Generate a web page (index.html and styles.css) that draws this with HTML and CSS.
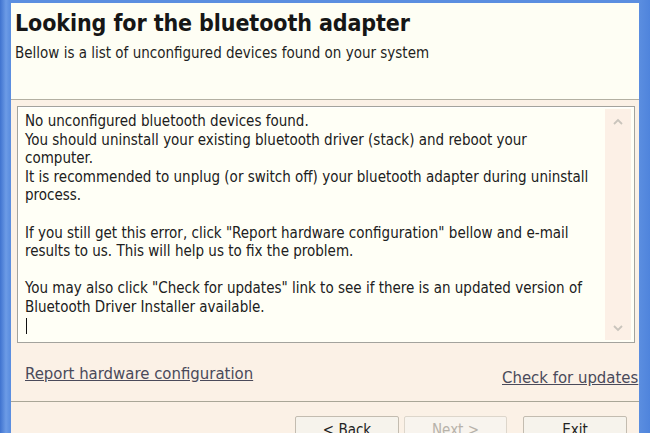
FILE: index.html
```html
<!DOCTYPE html>
<html>
<head>
<meta charset="utf-8">
<link rel="stylesheet" href="styles.css">
</head>
<body>
<div class="frame">
  <div class="window">
    <div class="header">
      <h1 class="title">Looking for the bluetooth adapter</h1>
      <p class="subtitle">Bellow is a list of unconfigured devices found on your system</p>
    </div>
    <div class="content">
      <div class="memo">
        <div class="memo-text">
          <p class="line">No unconfigured bluetooth devices found.</p>
          <p class="line">You should uninstall your existing bluetooth driver (stack) and reboot your</p>
          <p class="line">computer.</p>
          <p class="line">It is recommended to unplug (or switch off) your bluetooth adapter during uninstall</p>
          <p class="line">process.</p>
          <p class="line">&nbsp;</p>
          <p class="line">If you still get this error, click "Report hardware configuration" bellow and e-mail</p>
          <p class="line">results to us. This will help us to fix the problem.</p>
          <p class="line">&nbsp;</p>
          <p class="line">You may also click "Check for updates" link to see if there is an updated version of</p>
          <p class="line">Bluetooth Driver Installer available.</p>
          <p class="line"><span class="caret"></span></p>
        </div>
        <div class="scrollbar">
          <svg class="arrow" width="12" height="8" viewBox="0 0 12 8"><path d="M2 6 L6 2 L10 6" fill="none" stroke="#c9c4bc" stroke-width="1.8"/></svg>
          <svg class="arrow" width="12" height="8" viewBox="0 0 12 8"><path d="M2 2 L6 6 L10 2" fill="none" stroke="#c9c4bc" stroke-width="1.8"/></svg>
        </div>
      </div>
      <div class="links">
        <a class="link link-report">Report hardware configuration</a>
        <a class="link link-update">Check for updates</a>
      </div>
    </div>
    <div class="footer">
      <button class="btn btn-back">&lt; Back</button>
      <button class="btn btn-next" disabled>Next &gt;</button>
      <button class="btn btn-exit">Exit</button>
    </div>
  </div>
</div>
</body>
</html>
```

FILE: styles.css
```css
html, body {
  margin: 0;
  padding: 0;
  height: 100%;
  overflow: hidden;
}
body {
  background: #5a8de0;
  font-family: "DejaVu Sans Condensed", "DejaVu Sans", sans-serif;
  color: #1a1a1a;
}
.frame {
  height: 100%;
  padding: 3px 11px 0 11px;
  box-sizing: border-box;
  background: linear-gradient(to right, #3f73cf 0, #6c9be6 6px, #5b8ee0 10px, #5b8ee0 639px, #4f84dc 650px);
}
.window {
  height: 100%;
  display: flex;
  flex-direction: column;
  background: #fbf1e6;
  overflow: hidden;
}
.header, .content, .footer {
  flex-shrink: 0;
}
.header {
  height: 97px;
  box-sizing: border-box;
  background: #fefef4;
  border-bottom: 1px solid #b3b0a2;
  padding: 6px 0 0 4px;
}
.title {
  margin: 0;
  font-size: 23px;
  font-weight: bold;
  line-height: 28px;
  color: #161616;
  letter-spacing: -0.1px;
}
.subtitle {
  margin: 7px 0 0 0;
  font-size: 15px;
  line-height: 18px;
  color: #1e1e1e;
}
.content {
  padding: 6px 4px 0 6px;
}
.memo {
  height: 237px;
  box-sizing: border-box;
  border: 1px solid #a3a39d;
  box-shadow: inset 1px 1px 0 #ffffff;
  background: #fffff6;
  display: flex;
}
.memo-text {
  flex: 1;
  padding: 5px 0 0 7px;
}
.line {
  margin: 0;
  font-size: 15px;
  line-height: 18.6px;
  white-space: nowrap;
  color: #202020;
}
.caret {
  display: inline-block;
  width: 1px;
  height: 16px;
  background: #111;
  vertical-align: middle;
  margin-left: 1px;
}
.scrollbar {
  width: 26px;
  margin: 2px 3px 2px 0;
  background: #fcf0e6;
  display: flex;
  flex-direction: column;
  justify-content: space-between;
  align-items: center;
  padding: 9px 0 8px;
}
.arrow {
  display: block;
}
.links {
  height: 58px;
  position: relative;
  border-bottom: 1px solid #a9a697;
  margin: 0 -4px 0 -6px;
}
.link {
  position: absolute;
  font-size: 16.6px;
  color: #4a4a5a;
  text-decoration: underline;
  white-space: nowrap;
}
.link-report {
  left: 14px;
  top: 21px;
}
.link-update {
  left: 491px;
  top: 25px;
}
.footer {
  display: flex;
  padding: 14px 0 0 284px;
}
.btn {
  height: 30px;
  box-sizing: border-box;
  font-family: "DejaVu Sans Condensed", "DejaVu Sans", sans-serif;
  font-size: 15px;
  background: #f6f3ec;
  border: 1px solid #c3bcb0;
  border-radius: 2px;
  color: #222;
  padding: 0 0 2px;
}
.btn-back {
  width: 104px;
}
.btn-next {
  width: 103px;
  margin-left: 5px;
  color: #b7b2aa;
  border-color: #ddd6cb;
  background: #f8f4ee;
}
.btn-exit {
  width: 104px;
  margin-left: 16px;
}
```
